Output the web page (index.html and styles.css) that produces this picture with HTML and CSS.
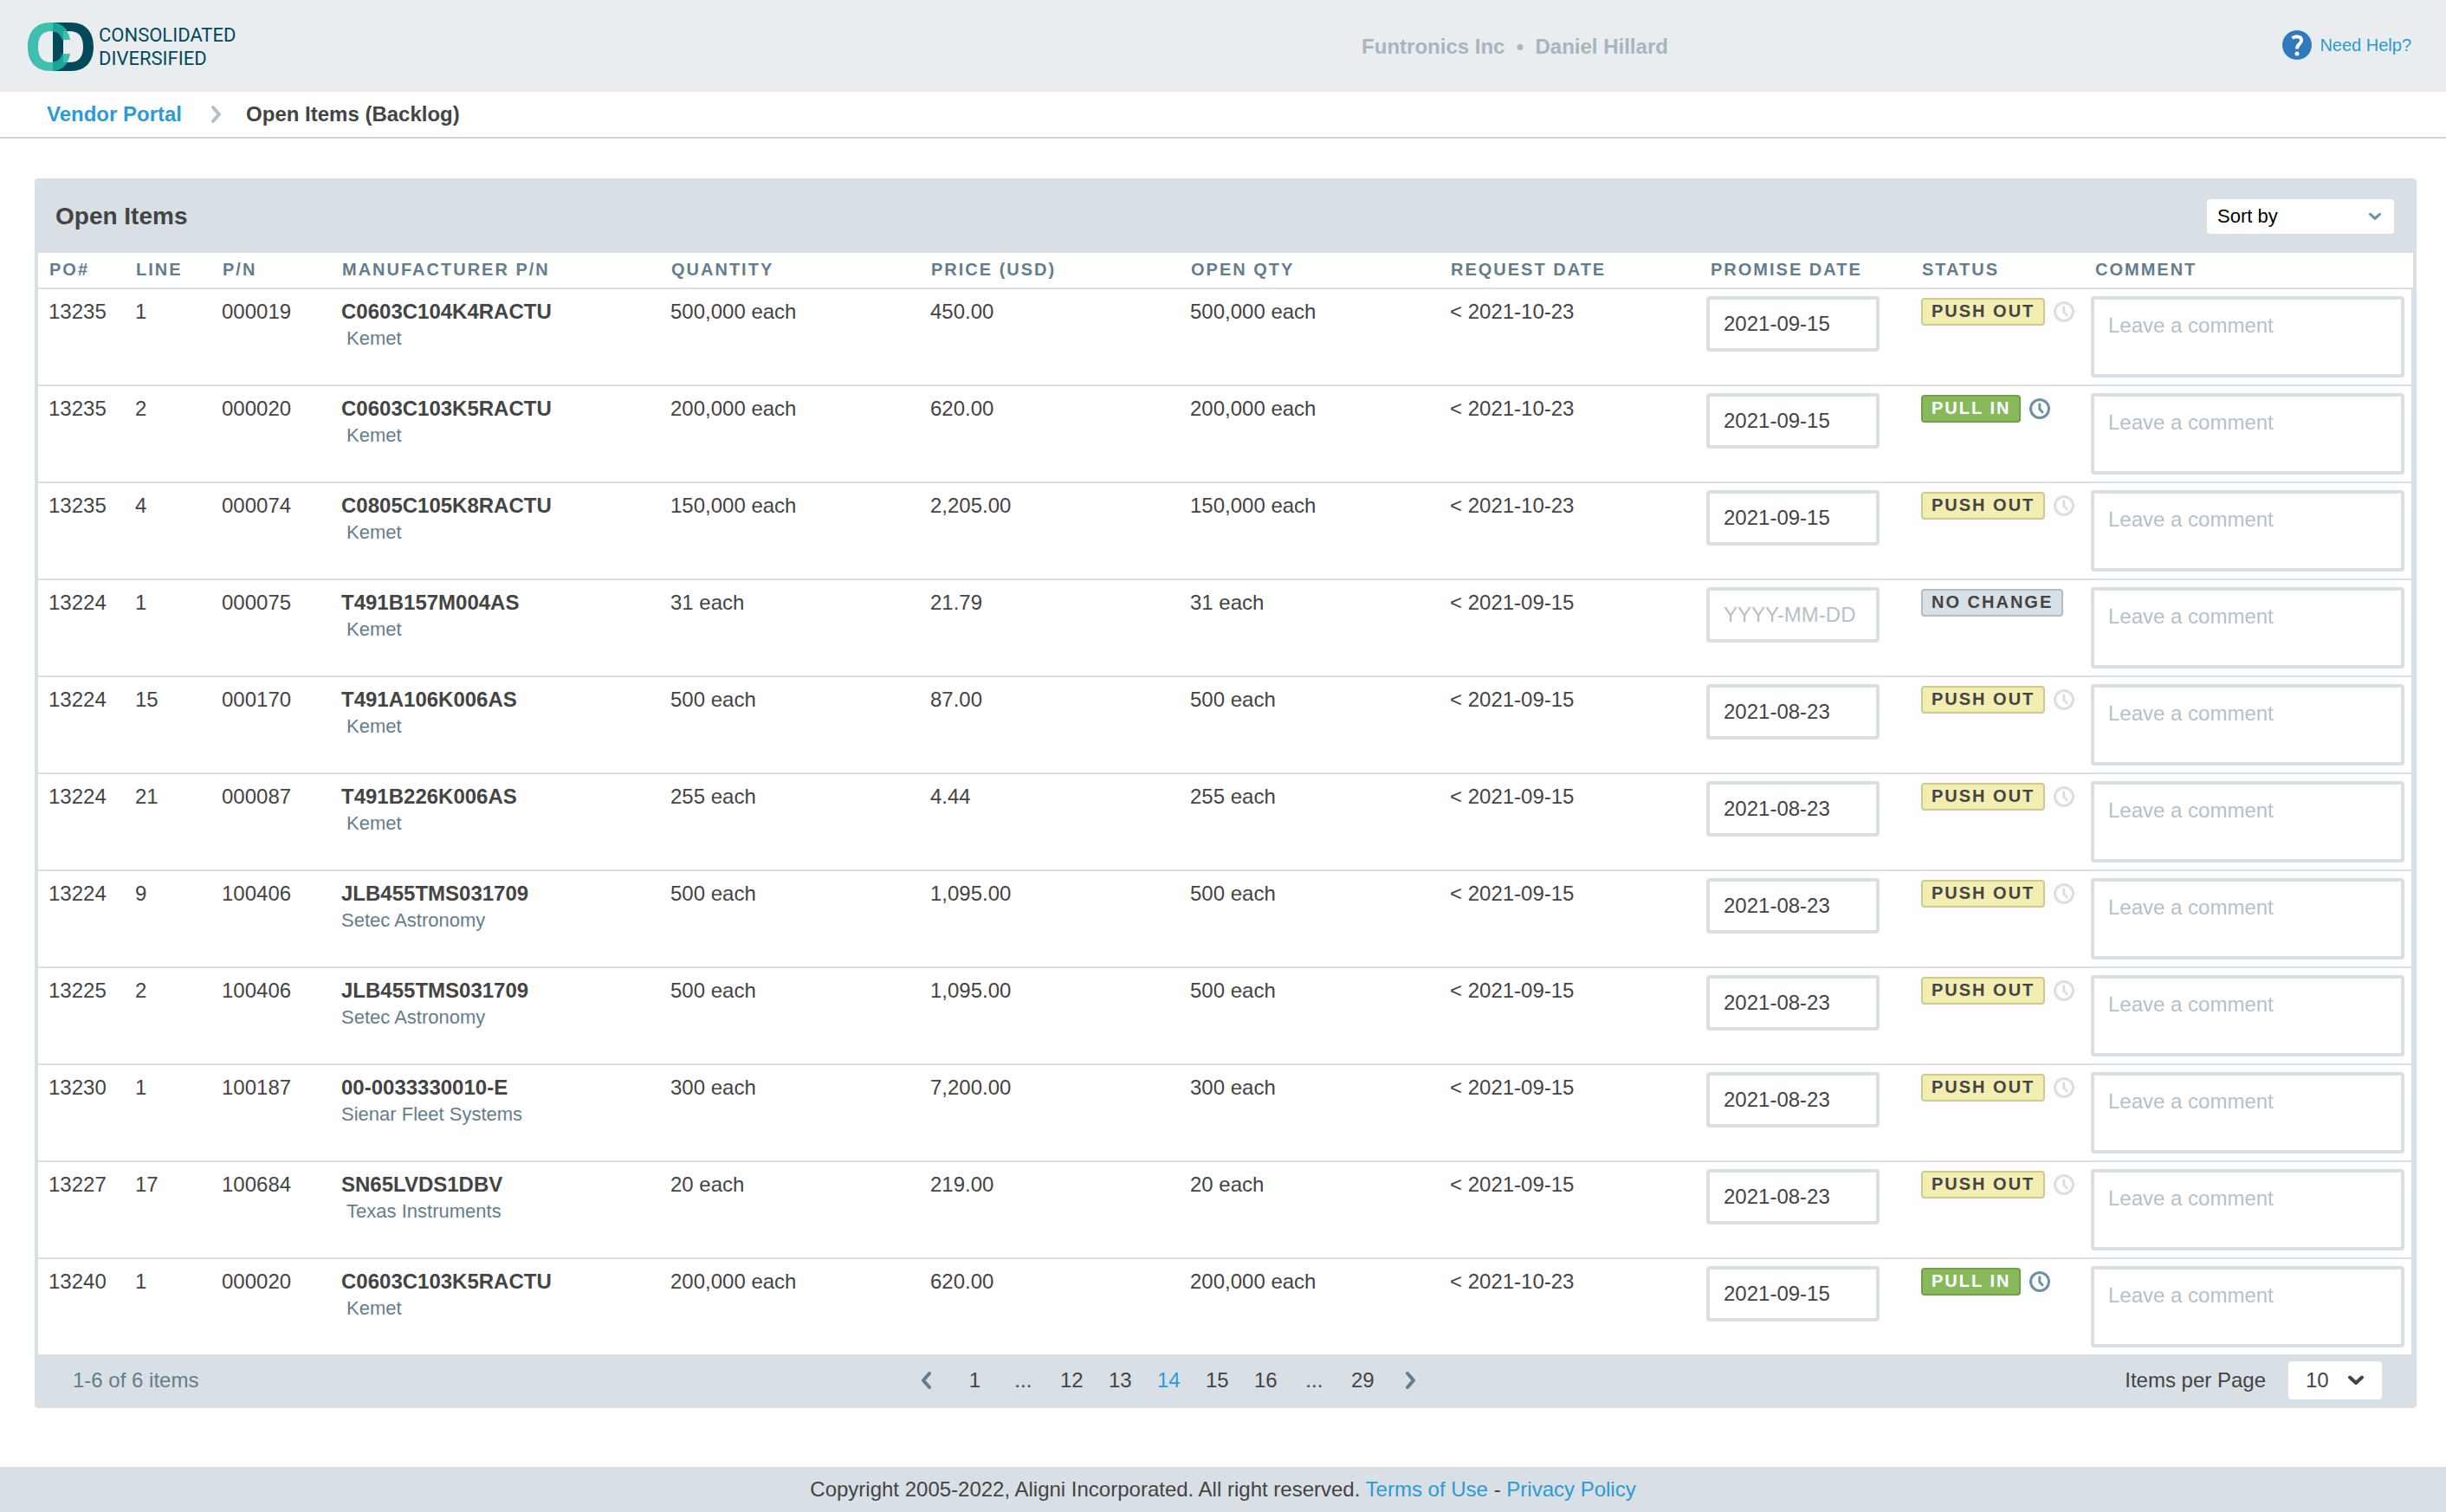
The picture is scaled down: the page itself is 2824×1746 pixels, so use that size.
FILE: index.html
```html
<!DOCTYPE html>
<html lang="en">
<head>
  <meta charset="UTF-8">
  <meta name="viewport" content="width=device-width, initial-scale=1.0">
  <title>Open Items (Backlog)</title>
  <link rel="stylesheet" href="styles.css">
</head>
<body>
  <!-- shared icons -->
  <svg class="sprite" aria-hidden="true">
    <symbol id="clock" viewBox="0 0 24 24">
      <circle cx="12" cy="12" r="10.5" />
      <path d="M11.8 6.8V12.5L15 15.8" />
    </symbol>
    <symbol id="down" viewBox="0 0 18 12">
      <path d="M2 2.5L9 9L16 2.5" />
    </symbol>
    <symbol id="left" viewBox="0 0 12 20">
      <path d="M10 2L3 10L10 18" />
    </symbol>
    <symbol id="right" viewBox="0 0 12 20">
      <path d="M2 2L9 10L2 18" />
    </symbol>
  </svg>

  <header class="header">
    <a class="brand" href="#">
      <svg class="brand-mark" viewBox="0 0 76 56" aria-hidden="true">
        <defs>
          <clipPath id="clip-c">
            <path d="M49 20C47 7 39 0 26 0C9 0 0 11 0 28C0 45 9 56 26 56C39 56 47 49 49 36H40C39 42 34 46 27 46C17 46 12 40 12 28C12 16 17 10 27 10C34 10 39 14 40 20Z" />
          </clipPath>
        </defs>
        <path fill="#024a5a" fill-rule="evenodd" d="M29 0H50C67 0 76 11 76 28C76 45 67 56 50 56H29ZM41 10V46H48C59 46 64 40 64 28C64 16 59 10 48 10Z" />
        <path fill="#3ebfb0" d="M49 20C47 7 39 0 26 0C9 0 0 11 0 28C0 45 9 56 26 56C39 56 47 49 49 36H40C39 42 34 46 27 46C17 46 12 40 12 28C12 16 17 10 27 10C34 10 39 14 40 20Z" />
        <path clip-path="url(#clip-c)" fill="#1aa596" fill-rule="evenodd" d="M29 0H50C67 0 76 11 76 28C76 45 67 56 50 56H29ZM41 10V46H48C59 46 64 40 64 28C64 16 59 10 48 10Z" />
      </svg>
      <span class="brand-name">CONSOLIDATED<br>DIVERSIFIED</span>
    </a>
    <div class="account">Funtronics Inc&nbsp; •&nbsp; Daniel Hillard</div>
    <a class="help" href="#">
      <svg class="help-icon" viewBox="0 0 36 36" aria-hidden="true">
        <circle cx="18" cy="18" r="17.5" fill="#3079be" stroke="#f7f9fa" />
        <path d="M12.6 10.2C15 7.6 23.2 7 23.2 12.6C23.2 16.8 18 16.4 18 22.4" fill="none" stroke="#fff" stroke-width="3.8" />
        <circle cx="18" cy="28" r="2.5" fill="#fff" />
      </svg>
      Need Help?
    </a>
  </header>

  <nav class="crumbs" aria-label="Breadcrumb">
    <a href="#">Vendor Portal</a>
    <svg class="crumb-arrow" aria-hidden="true"><use href="#right" /></svg>
    <span>Open Items (Backlog)</span>
  </nav>

  <main class="panel">
    <div class="panel-head">
      <h1>Open Items</h1>
      <div class="select sort">
        <select aria-label="Sort by">
          <option>Sort by</option>
          <option>PO#</option>
          <option>Request Date</option>
          <option>Status</option>
        </select>
        <svg aria-hidden="true"><use href="#down" /></svg>
      </div>
    </div>

    <table class="items">
      <colgroup>
        <col class="w-po">
        <col class="w-po">
        <col class="w-pn">
        <col class="w-mpn">
        <col class="w-num">
        <col class="w-num">
        <col class="w-num">
        <col class="w-num">
        <col class="w-promise">
        <col class="w-status">
        <col>
      </colgroup>
      <thead>
        <tr>
          <th>PO#</th>
          <th>LINE</th>
          <th>P/N</th>
          <th>MANUFACTURER P/N</th>
          <th>QUANTITY</th>
          <th>PRICE (USD)</th>
          <th>OPEN QTY</th>
          <th>REQUEST DATE</th>
          <th>PROMISE DATE</th>
          <th>STATUS</th>
          <th>COMMENT</th>
        </tr>
      </thead>
      <tbody>
        <tr>
          <td>13235</td>
          <td>1</td>
          <td>000019</td>
          <td><b>C0603C104K4RACTU</b><small>&nbsp;Kemet</small></td>
          <td>500,000 each</td>
          <td>450.00</td>
          <td>500,000 each</td>
          <td>&lt; 2021-10-23</td>
          <td class="field"><input type="text" aria-label="Promise date" placeholder="YYYY-MM-DD" value="2021-09-15"></td>
          <td><div class="status"><span class="badge push">PUSH OUT</span><svg class="clock"><use href="#clock" /></svg></div></td>
          <td class="field"><textarea aria-label="Comment" placeholder="Leave a comment"></textarea></td>
        </tr>
        <tr>
          <td>13235</td>
          <td>2</td>
          <td>000020</td>
          <td><b>C0603C103K5RACTU</b><small>&nbsp;Kemet</small></td>
          <td>200,000 each</td>
          <td>620.00</td>
          <td>200,000 each</td>
          <td>&lt; 2021-10-23</td>
          <td class="field"><input type="text" aria-label="Promise date" placeholder="YYYY-MM-DD" value="2021-09-15"></td>
          <td><div class="status"><span class="badge pull">PULL IN</span><svg class="clock on"><use href="#clock" /></svg></div></td>
          <td class="field"><textarea aria-label="Comment" placeholder="Leave a comment"></textarea></td>
        </tr>
        <tr>
          <td>13235</td>
          <td>4</td>
          <td>000074</td>
          <td><b>C0805C105K8RACTU</b><small>&nbsp;Kemet</small></td>
          <td>150,000 each</td>
          <td>2,205.00</td>
          <td>150,000 each</td>
          <td>&lt; 2021-10-23</td>
          <td class="field"><input type="text" aria-label="Promise date" placeholder="YYYY-MM-DD" value="2021-09-15"></td>
          <td><div class="status"><span class="badge push">PUSH OUT</span><svg class="clock"><use href="#clock" /></svg></div></td>
          <td class="field"><textarea aria-label="Comment" placeholder="Leave a comment"></textarea></td>
        </tr>
        <tr>
          <td>13224</td>
          <td>1</td>
          <td>000075</td>
          <td><b>T491B157M004AS</b><small>&nbsp;Kemet</small></td>
          <td>31 each</td>
          <td>21.79</td>
          <td>31 each</td>
          <td>&lt; 2021-09-15</td>
          <td class="field"><input type="text" aria-label="Promise date" placeholder="YYYY-MM-DD"></td>
          <td><div class="status"><span class="badge">NO CHANGE</span></div></td>
          <td class="field"><textarea aria-label="Comment" placeholder="Leave a comment"></textarea></td>
        </tr>
        <tr>
          <td>13224</td>
          <td>15</td>
          <td>000170</td>
          <td><b>T491A106K006AS</b><small>&nbsp;Kemet</small></td>
          <td>500 each</td>
          <td>87.00</td>
          <td>500 each</td>
          <td>&lt; 2021-09-15</td>
          <td class="field"><input type="text" aria-label="Promise date" placeholder="YYYY-MM-DD" value="2021-08-23"></td>
          <td><div class="status"><span class="badge push">PUSH OUT</span><svg class="clock"><use href="#clock" /></svg></div></td>
          <td class="field"><textarea aria-label="Comment" placeholder="Leave a comment"></textarea></td>
        </tr>
        <tr>
          <td>13224</td>
          <td>21</td>
          <td>000087</td>
          <td><b>T491B226K006AS</b><small>&nbsp;Kemet</small></td>
          <td>255 each</td>
          <td>4.44</td>
          <td>255 each</td>
          <td>&lt; 2021-09-15</td>
          <td class="field"><input type="text" aria-label="Promise date" placeholder="YYYY-MM-DD" value="2021-08-23"></td>
          <td><div class="status"><span class="badge push">PUSH OUT</span><svg class="clock"><use href="#clock" /></svg></div></td>
          <td class="field"><textarea aria-label="Comment" placeholder="Leave a comment"></textarea></td>
        </tr>
        <tr>
          <td>13224</td>
          <td>9</td>
          <td>100406</td>
          <td><b>JLB455TMS031709</b><small>Setec Astronomy</small></td>
          <td>500 each</td>
          <td>1,095.00</td>
          <td>500 each</td>
          <td>&lt; 2021-09-15</td>
          <td class="field"><input type="text" aria-label="Promise date" placeholder="YYYY-MM-DD" value="2021-08-23"></td>
          <td><div class="status"><span class="badge push">PUSH OUT</span><svg class="clock"><use href="#clock" /></svg></div></td>
          <td class="field"><textarea aria-label="Comment" placeholder="Leave a comment"></textarea></td>
        </tr>
        <tr>
          <td>13225</td>
          <td>2</td>
          <td>100406</td>
          <td><b>JLB455TMS031709</b><small>Setec Astronomy</small></td>
          <td>500 each</td>
          <td>1,095.00</td>
          <td>500 each</td>
          <td>&lt; 2021-09-15</td>
          <td class="field"><input type="text" aria-label="Promise date" placeholder="YYYY-MM-DD" value="2021-08-23"></td>
          <td><div class="status"><span class="badge push">PUSH OUT</span><svg class="clock"><use href="#clock" /></svg></div></td>
          <td class="field"><textarea aria-label="Comment" placeholder="Leave a comment"></textarea></td>
        </tr>
        <tr>
          <td>13230</td>
          <td>1</td>
          <td>100187</td>
          <td><b>00-0033330010-E</b><small>Sienar Fleet Systems</small></td>
          <td>300 each</td>
          <td>7,200.00</td>
          <td>300 each</td>
          <td>&lt; 2021-09-15</td>
          <td class="field"><input type="text" aria-label="Promise date" placeholder="YYYY-MM-DD" value="2021-08-23"></td>
          <td><div class="status"><span class="badge push">PUSH OUT</span><svg class="clock"><use href="#clock" /></svg></div></td>
          <td class="field"><textarea aria-label="Comment" placeholder="Leave a comment"></textarea></td>
        </tr>
        <tr>
          <td>13227</td>
          <td>17</td>
          <td>100684</td>
          <td><b>SN65LVDS1DBV</b><small>&nbsp;Texas Instruments</small></td>
          <td>20 each</td>
          <td>219.00</td>
          <td>20 each</td>
          <td>&lt; 2021-09-15</td>
          <td class="field"><input type="text" aria-label="Promise date" placeholder="YYYY-MM-DD" value="2021-08-23"></td>
          <td><div class="status"><span class="badge push">PUSH OUT</span><svg class="clock"><use href="#clock" /></svg></div></td>
          <td class="field"><textarea aria-label="Comment" placeholder="Leave a comment"></textarea></td>
        </tr>
        <tr>
          <td>13240</td>
          <td>1</td>
          <td>000020</td>
          <td><b>C0603C103K5RACTU</b><small>&nbsp;Kemet</small></td>
          <td>200,000 each</td>
          <td>620.00</td>
          <td>200,000 each</td>
          <td>&lt; 2021-10-23</td>
          <td class="field"><input type="text" aria-label="Promise date" placeholder="YYYY-MM-DD" value="2021-09-15"></td>
          <td><div class="status"><span class="badge pull">PULL IN</span><svg class="clock on"><use href="#clock" /></svg></div></td>
          <td class="field"><textarea aria-label="Comment" placeholder="Leave a comment"></textarea></td>
        </tr>
      </tbody>
    </table>

    <div class="panel-foot">
      <span class="count">1-6 of 6 items</span>
      <nav class="pager" aria-label="Pages">
        <button type="button" aria-label="Previous page"><svg><use href="#left" /></svg></button>
        <button type="button">1</button>
        <span>...</span>
        <button type="button">12</button>
        <button type="button">13</button>
        <button type="button" class="active" aria-current="page">14</button>
        <button type="button">15</button>
        <button type="button">16</button>
        <span>...</span>
        <button type="button">29</button>
        <button type="button" aria-label="Next page"><svg><use href="#right" /></svg></button>
      </nav>
      <div class="per-page">
        <label for="per-page">Items per Page</label>
        <div class="select count-select">
          <select id="per-page">
            <option>10</option>
            <option>25</option>
            <option>50</option>
          </select>
          <svg aria-hidden="true"><use href="#down" /></svg>
        </div>
      </div>
    </div>
  </main>

  <footer class="footer">
    Copyright 2005-2022, Aligni Incorporated. All right reserved.
    <a href="#">Terms of Use</a> - <a href="#">Privacy Policy</a>
  </footer>
</body>
</html>
```

FILE: styles.css
```css
* {
  box-sizing: border-box;
}
body {
  margin: 0;
  min-height: 100vh;
  display: flex;
  flex-direction: column;
  background: #fff;
  color: #444;
  font: 24px/32px "Liberation Sans", Arial, sans-serif;
}
a {
  color: #2a9bd6;
  text-decoration: none;
}
svg {
  display: block;
}
input, textarea, select, button {
  font: inherit;
  color: inherit;
  margin: 0;
}
/* no display: none here, the symbols must stay renderable */
.sprite {
  position: absolute;
  width: 0;
  height: 0;
}

/* header */
.header {
  display: grid;
  grid-template-columns: 2fr 1fr 1fr;
  column-gap: 12px;
  align-items: center;
  height: 106px;
  padding: 0 40px 0 32px;
  background: #e9edf0;
}
.brand {
  display: flex;
  align-items: center;
  gap: 6px;
  padding-top: 2px;
  color: #024a5a;
  font: 22px/27px Roboto, sans-serif;
}
.brand-mark {
  width: 76px;
  height: 56px;
}
.account {
  padding-top: 2px;
  text-align: center;
  white-space: nowrap;
  font-weight: bold;
  color: #a7b5bd;
}
.help {
  display: flex;
  justify-content: flex-end;
  align-items: center;
  gap: 8px;
  padding-bottom: 2px;
  font-size: 20px;
}
.help-icon {
  width: 36px;
  height: 36px;
}

/* breadcrumb */
.crumbs {
  display: flex;
  align-items: center;
  gap: 28px;
  height: 54px;
  padding: 0 54px;
  border-bottom: 2px solid #d4d4d4;
  font-weight: bold;
}
.crumb-arrow {
  width: 12px;
  height: 20px;
  margin-left: 6px;
  fill: none;
  stroke: #b5c1c9;
  stroke-width: 4;
  stroke-linecap: round;
  stroke-linejoin: round;
}

/* panel */
.panel {
  margin: 46px 34px 68px 40px;
  padding: 0 4px;
  background: #d8dfe5;
  border-radius: 4px;
}
.panel-head {
  display: flex;
  justify-content: space-between;
  align-items: center;
  height: 86px;
  padding: 2px 22px 0 20px;
}
.panel-head h1 {
  margin: 0;
  font-size: 28px;
}
.select {
  position: relative;
}
.select select {
  display: block;
  width: 100%;
  appearance: none;
  border: 0;
  border-radius: 4px;
  background: #fff;
}
.select svg {
  position: absolute;
  top: 50%;
  transform: translateY(-50%);
  pointer-events: none;
  fill: none;
  stroke-width: 4;
  stroke-linecap: round;
  stroke-linejoin: round;
}
.sort {
  width: 216px;
}
.sort select {
  height: 40px;
  padding: 0 12px;
  color: #000;
  font-size: 22px;
}
.sort svg {
  right: 15px;
  width: 14px;
  height: 10px;
  stroke: #6c92a8;
}

/* table */
.items {
  width: 100%;
  table-layout: fixed;
  border-spacing: 0;
  background: #fff;
}
.w-po { width: 100px; }
.w-pn { width: 138px; }
.w-mpn { width: 380px; }
.w-num { width: 300px; }
.w-promise { width: 244px; }
.w-status { width: 200px; }
.items th {
  padding: 6px 0 8px 13px;
  border-bottom: 2px solid #d8dfe5;
  text-align: left;
  white-space: nowrap;
  font-size: 20px;
  line-height: 26px;
  letter-spacing: 2px;
  color: #657d8b;
}
.items td {
  padding: 10px 0 0 12px;
  border-bottom: 2px solid #d8dfe5;
  vertical-align: top;
}
.items td:last-child {
  border-right: 2px solid #d8dfe5;
}
.items tr:last-child td {
  border-bottom: 0;
}
.items td.field {
  padding: 8px;
}
.items b, .items small {
  display: block;
}
.items small {
  font-size: 22px;
  line-height: 30px;
  color: #657d8b;
}
.items input, .items textarea {
  display: block;
  border: 4px solid #d8dfe5;
  border-radius: 4px;
  background: #fff;
}
.items input {
  width: 200px;
  height: 64px;
  padding: 0 16px;
}
.items textarea {
  width: 100%;
  height: 94px;
  padding: 16px;
  line-height: 28px;
  resize: none;
  overflow: hidden;
}
.items ::placeholder {
  color: #b5c1c9;
}
.status {
  display: flex;
  align-items: center;
  gap: 10px;
}
.badge {
  padding: 0 10px 2px;
  border: 2px solid #b4bcbf;
  border-radius: 4px;
  background: #d8dfe5;
  white-space: nowrap;
  font-size: 20px;
  line-height: 26px;
  font-weight: bold;
  letter-spacing: 2px;
}
.badge.push {
  border-color: #cfca93;
  background: #f2edb0;
}
.badge.pull {
  border-color: #719e4b;
  background: #88ba5b;
  color: #fff;
}
.clock {
  width: 24px;
  height: 24px;
  fill: none;
  stroke: #d8dfe5;
  stroke-width: 3;
  stroke-linecap: round;
}
.clock.on {
  stroke: #6c92a8;
}

/* panel footer */
.panel-foot {
  display: flex;
  justify-content: space-between;
  align-items: center;
  padding: 8px 36px 10px 40px;
}
.count {
  color: #657d8b;
}
.pager {
  display: flex;
  align-items: center;
  margin-left: 16px;
}
.pager button, .pager span {
  display: flex;
  justify-content: center;
  width: 56px;
  padding: 0;
  border: 0;
  background: none;
}
.pager .active {
  color: #2a9bd6;
}
.pager svg {
  width: 12px;
  height: 20px;
  fill: none;
  stroke: #657d8b;
  stroke-width: 4;
  stroke-linecap: round;
  stroke-linejoin: round;
}
.per-page {
  display: flex;
  align-items: center;
  gap: 26px;
}
.count-select {
  width: 108px;
}
.count-select select {
  height: 44px;
  padding: 0 20px;
}
.count-select svg {
  right: 21px;
  width: 18px;
  height: 12px;
  stroke: #444;
}

.footer {
  margin-top: auto;
  padding: 10px;
  background: #d8dfe5;
  text-align: center;
}
```
